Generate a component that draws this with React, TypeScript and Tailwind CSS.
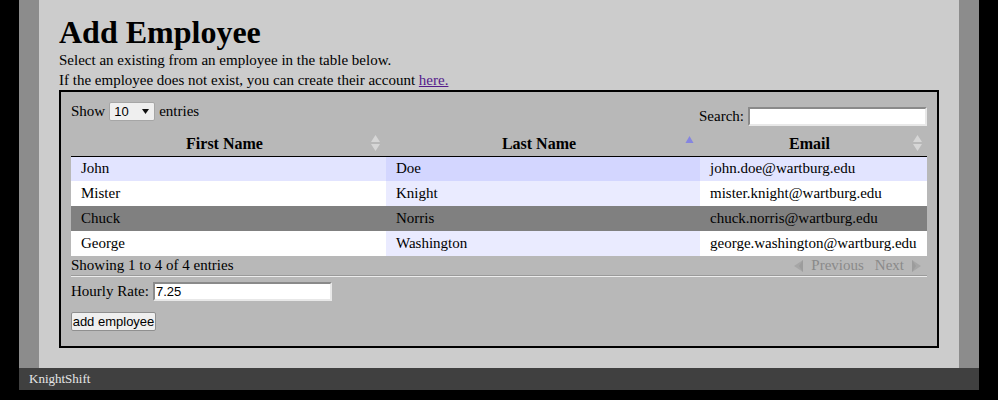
import React from 'react'

interface Employee {
  first: string
  last: string
  email: string
}

const EMPLOYEES: Employee[] = [
  { first: 'John', last: 'Doe', email: 'john.doe@wartburg.edu' },
  { first: 'Mister', last: 'Knight', email: 'mister.knight@wartburg.edu' },
  { first: 'Chuck', last: 'Norris', email: 'chuck.norris@wartburg.edu' },
  { first: 'George', last: 'Washington', email: 'george.washington@wartburg.edu' },
]

// row index that is hovered / selected in the screenshot
const ACTIVE_ROW = 2

function SortBoth() {
  return (
    <svg width="9" height="16" viewBox="0 0 9 16" className="block">
      <polygon points="4.5,0 9,7 0,7" fill="#d6d6d6" />
      <polygon points="0,9 9,9 4.5,16" fill="#d6d6d6" />
    </svg>
  )
}

function SortAsc() {
  return (
    <svg width="9" height="16" viewBox="0 0 9 16" className="block">
      <polygon points="4.5,1 8.5,8 0.5,8" fill="#8585e0" />
    </svg>
  )
}

function cellBg(row: number, col: number) {
  if (row === ACTIVE_ROW) return 'bg-[#808080]'
  const odd = row % 2 === 0
  if (col === 1) return odd ? 'bg-[#d3d6ff]' : 'bg-[#eaebff]'
  return odd ? 'bg-[#e2e4ff]' : 'bg-white'
}

export default function App() {
  return (
    <div className="min-h-[400px] bg-black font-['Liberation_Serif','Times_New_Roman',serif] text-[15px] text-black">
      <div className="mx-[19px] bg-[#8c8c8c] px-[20px]">
        <div className="bg-[#cccccc] px-[20px] pt-[15px] pb-[20px]">
          <h1 className="text-[32px] font-bold leading-[35px]">Add Employee</h1>
          <p className="leading-[20px]">Select an existing from an employee in the table below.</p>
          <p className="leading-[20px]">
            If the employee does not exist, you can create their account{' '}
            <a href="#" className="text-[#551a8b] underline">here.</a>
          </p>

          {/* Table wrapper */}
          <div className="border-2 border-black bg-[#b8b8b8] px-[10px] pb-[15px]">
            <div className="flex h-[40px] items-start justify-between">
              <div className="mt-[10px] flex h-[19px] items-center">
                <span>Show</span>
                <div className="mx-[4px] flex h-[19px] w-[46px] items-center justify-between rounded-[2px] border border-[#a6a6a6] bg-[#efefef] pl-[4px] pr-[5px] font-['Liberation_Sans',Arial,sans-serif] text-[13px]">
                  <span>10</span>
                  <svg width="7" height="5" viewBox="0 0 7 5"><polygon points="0,0 7,0 3.5,5" fill="#111" /></svg>
                </div>
                <span>entries</span>
              </div>
              <div className="mt-[15px] flex h-[19px] items-center">
                <span>Search:</span>
                <input
                  type="text"
                  className="ml-[4px] h-[19px] w-[179px] border-2 border-t-[#8a8a8a] border-l-[#8a8a8a] border-r-[#e8e8e8] border-b-[#e8e8e8] bg-white px-[2px] font-['Liberation_Sans',Arial,sans-serif] text-[13px] outline-none"
                />
              </div>
            </div>

            <table className="w-full table-fixed border-collapse">
              <colgroup>
                <col className="w-[315px]" />
                <col className="w-[314px]" />
                <col />
              </colgroup>
              <thead>
                <tr className="border-b border-black text-[16px]">
                  <th className="relative h-[24px] pl-[10px] pr-[18px] text-center font-bold leading-[18px]">
                    First Name
                    <span className="absolute right-[6px] top-[3px]"><SortBoth /></span>
                  </th>
                  <th className="relative h-[24px] pl-[10px] pr-[18px] text-center font-bold leading-[18px]">
                    Last Name
                    <span className="absolute right-[6px] top-[3px]"><SortAsc /></span>
                  </th>
                  <th className="relative h-[24px] pl-[10px] pr-[18px] text-center font-bold leading-[18px]">
                    Email
                    <span className="absolute right-[5px] top-[3px]"><SortBoth /></span>
                  </th>
                </tr>
              </thead>
              <tbody>
                {EMPLOYEES.map((emp, i) => (
                  <tr key={emp.email} className="h-[25px]">
                    <td className={`${cellBg(i, 0)} px-[10px] leading-[19px]`}>{emp.first}</td>
                    <td className={`${cellBg(i, 1)} px-[10px] leading-[19px]`}>{emp.last}</td>
                    <td className={`${cellBg(i, 2)} whitespace-nowrap px-[10px] leading-[19px]`}>{emp.email}</td>
                  </tr>
                ))}
              </tbody>
            </table>

            {/* Info + paging */}
            <div className="flex h-[19px] items-center justify-between leading-[19px]">
              <span>Showing 1 to 4 of 4 entries</span>
              <div className="flex items-center pr-[5px] text-[#8a8a8a]">
                <svg width="11" height="14" viewBox="0 0 11 14" className="mr-[7px] mt-[1px]">
                  <polygon points="10,1 10,13 1,7" fill="#a6a6a6" />
                  <polygon points="10,1 10,13 6,7" fill="#9c9c9c" />
                </svg>
                <span>Previous</span>
                <span className="ml-[11px]">Next</span>
                <svg width="11" height="14" viewBox="0 0 11 14" className="ml-[7px] mt-[1px]">
                  <polygon points="1,1 1,13 10,7" fill="#a6a6a6" />
                  <polygon points="1,1 1,13 5,7" fill="#9c9c9c" />
                </svg>
              </div>
            </div>
            <div className="border-t border-b border-t-[#9a9a9a] border-b-[#ececec]" />

            {/* Form */}
            <div className="mt-[5px] flex h-[19px] items-center">
              <span>Hourly Rate:</span>
              <input
                type="text"
                defaultValue="7.25"
                className="ml-[4px] h-[19px] w-[179px] border-2 border-t-[#8a8a8a] border-l-[#8a8a8a] border-r-[#e8e8e8] border-b-[#e8e8e8] bg-white px-[1px] font-['Liberation_Sans',Arial,sans-serif] text-[13px] text-black outline-none"
              />
            </div>
            <button className="mt-[11px] flex h-[19px] w-[85px] items-center justify-center rounded-[2px] border border-[#8f8f8f] bg-[#efefef] font-['Liberation_Sans',Arial,sans-serif] text-[13px] leading-none">
              add employee
            </button>
          </div>
        </div>
      </div>
      <footer className="mx-[19px] h-[22px] bg-[#404040] px-[10px] text-[13px] leading-[22px] text-[#e6e6e6]">
        KnightShift
      </footer>
    </div>
  )
}
